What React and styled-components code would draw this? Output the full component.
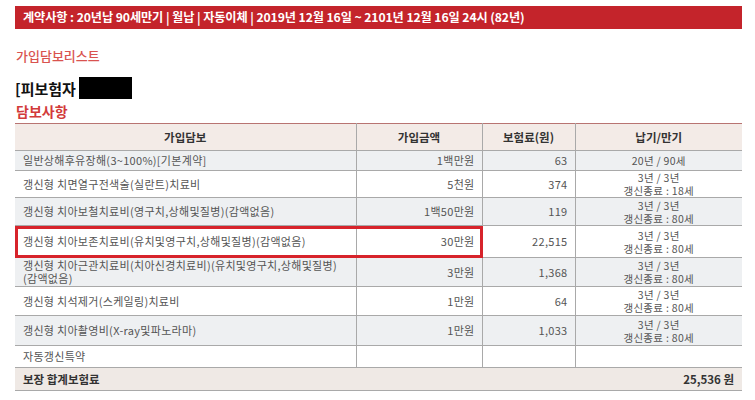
import React from 'react'
import styled, { createGlobalStyle } from 'styled-components'

const Global = createGlobalStyle`
    body {
        margin: 0;
        background: #fff;
        font-family: "Noto Sans CJK KR", "Noto Sans", sans-serif;
    }
`

const Page = styled.div`
    width: 727px;
    padding: 6px 0 0 15px;
`

const ContractBar = styled.div`
    background: #c4242b;
    color: #fff;
    height: 23px;
    line-height: 23px;
    padding-left: 8px;
    font-size: 12.2px;
    font-weight: 700;
    letter-spacing: -0.1px;
`

const ListTitle = styled.h3`
    margin: 18px 0 0 1px;
    color: #d9534f;
    font-size: 13px;
    font-weight: 500;
    line-height: 18px;
`

const Insured = styled.div`
    display: flex;
    align-items: center;
    gap: 3px;
    margin-top: 12px;
    height: 22px;
    font-size: 15px;
    font-weight: 700;
    color: #111;
`

const Masked = styled.span`
    display: inline-block;
    width: 53px;
    height: 22px;
    background: #000;
`

const SectionTitle = styled.h4`
    margin: 2px 0 0 1px;
    color: #d23a3a;
    font-size: 14px;
    font-weight: 700;
    line-height: 20px;
`

const TableWrap = styled.div`
    position: relative;
    margin-top: 2px;
`

const Table = styled.table`
    width: 727px;
    border-collapse: collapse;
    table-layout: fixed;
    border-top: 1px solid #b87472;
    font-size: 11px;
    color: #555;
`

const HeadCell = styled.th`
    height: 26px;
    padding: 0;
    background: #f3ebe7;
    color: #333;
    font-size: 11.5px;
    font-weight: 700;
    border-bottom: 1px solid #a9a9a9;
    border-left: ${p => (p.$first ? 'none' : '1px solid #a9a9a9')};
`

const Row = styled.tr`
    height: ${p => p.$h}px;
    background: ${p => (p.$shade ? '#eef0f2' : '#fff')};
`

const Cell = styled.td`
    padding: 0 ${p => (p.$align === 'right' ? '7px' : '8px')} 0 8px;
    text-align: ${p => p.$align || 'left'};
    line-height: 13px;
    letter-spacing: 0.3px;
    word-break: keep-all;
    border-bottom: 1px solid #a9a9a9;
    border-left: ${p => (p.$first ? 'none' : '1px solid #a9a9a9')};
`

const TermLine = styled.div`
    font-size: 10.5px;
    line-height: 13px;
`

const TotalRow = styled.tr`
    height: 23px;
    background: #efe9e5;
    color: #333;
    font-weight: 700;
    font-size: 11.5px;
`

const TotalCell = styled.td`
    padding: 0 8px;
    text-align: ${p => p.$align || 'left'};
    border-bottom: 1px solid #a9a9a9;
`

const Highlight = styled.div`
    position: absolute;
    left: 0;
    top: 103px;
    width: 468px;
    height: 32px;
    border: 3px solid #d7232b;
    box-sizing: border-box;
    pointer-events: none;
`

const rows = [
    { name: '일반상해후유장해(3~100%)[기본계약]', amount: '1백만원', premium: '63', term: ['20년 / 90세'], h: 20 },
    { name: '갱신형 치면열구전색술(실란트)치료비', amount: '5천원', premium: '374', term: ['3년 / 3년', '갱신종료 : 18세'], h: 27 },
    { name: '갱신형 치아보철치료비(영구치,상해및질병)(감액없음)', amount: '1백50만원', premium: '119', term: ['3년 / 3년', '갱신종료 : 80세'], h: 28 },
    { name: '갱신형 치아보존치료비(유치및영구치,상해및질병)(감액없음)', amount: '30만원', premium: '22,515', term: ['3년 / 3년', '갱신종료 : 80세'], h: 32 },
    { name: '갱신형 치아근관치료비(치아신경치료비)(유치및영구치,상해및질병)(감액없음)', amount: '3만원', premium: '1,368', term: ['3년 / 3년', '갱신종료 : 80세'], h: 29 },
    { name: '갱신형 치석제거(스케일링)치료비', amount: '1만원', premium: '64', term: ['3년 / 3년', '갱신종료 : 80세'], h: 29 },
    { name: '갱신형 치아촬영비(X-ray및파노라마)', amount: '1만원', premium: '1,033', term: ['3년 / 3년', '갱신종료 : 80세'], h: 30 },
    { name: '자동갱신특약', amount: '', premium: '', term: [], h: 22 },
]

export default function App() {
    return (
        <Page>
            <Global />
            <ContractBar>
                계약사항 : 20년납 90세만기 | 월납 | 자동이체 | 2019년 12월 16일 ~ 2101년 12월 16일 24시 (82년)
            </ContractBar>
            <ListTitle>가입담보리스트</ListTitle>
            <Insured>
                [피보험자 <Masked />
            </Insured>
            <SectionTitle>담보사항</SectionTitle>
            <TableWrap>
                <Table>
                    <colgroup>
                        <col style={{ width: 341 }} />
                        <col style={{ width: 126 }} />
                        <col style={{ width: 93 }} />
                        <col style={{ width: 167 }} />
                    </colgroup>
                    <thead>
                        <tr>
                            <HeadCell $first>가입담보</HeadCell>
                            <HeadCell>가입금액</HeadCell>
                            <HeadCell>보험료(원)</HeadCell>
                            <HeadCell>납기/만기</HeadCell>
                        </tr>
                    </thead>
                    <tbody>
                        {rows.map((r, i) => (
                            <Row key={i} $h={r.h} $shade={i % 2 === 0}>
                                <Cell $first>{r.name}</Cell>
                                <Cell $align="right">{r.amount}</Cell>
                                <Cell $align="right">{r.premium}</Cell>
                                <Cell $align="center">
                                    {r.term.map((t, j) => (
                                        <TermLine key={j}>{t}</TermLine>
                                    ))}
                                </Cell>
                            </Row>
                        ))}
                        <TotalRow>
                            <TotalCell>보장 합계보험료</TotalCell>
                            <TotalCell colSpan={3} $align="right">25,536 원</TotalCell>
                        </TotalRow>
                    </tbody>
                </Table>
                <Highlight />
            </TableWrap>
        </Page>
    )
}
